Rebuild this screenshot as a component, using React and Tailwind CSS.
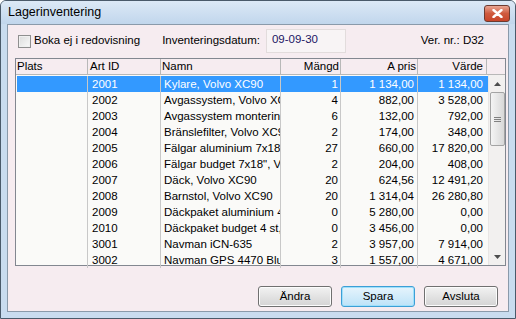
import React from 'react'

const rows = [
  ['2001', 'Kylare, Volvo XC90', '1', '1 134,00', '1 134,00'],
  ['2002', 'Avgassystem, Volvo XC90', '4', '882,00', '3 528,00'],
  ['2003', 'Avgassystem montering', '6', '132,00', '792,00'],
  ['2004', 'Bränslefilter, Volvo XC90', '2', '174,00', '348,00'],
  ['2005', 'Fälgar aluminium 7x18", Volvo', '27', '660,00', '17 820,00'],
  ['2006', 'Fälgar budget 7x18", Volvo', '2', '204,00', '408,00'],
  ['2007', 'Däck, Volvo XC90', '20', '624,56', '12 491,20'],
  ['2008', 'Barnstol, Volvo XC90', '20', '1 314,04', '26 280,80'],
  ['2009', 'Däckpaket aluminium 4 st, Volvo', '0', '5 280,00', '0,00'],
  ['2010', 'Däckpaket budget 4 st, Volvo', '0', '3 456,00', '0,00'],
  ['3001', 'Navman iCN-635', '2', '3 957,00', '7 914,00'],
  ['3002', 'Navman GPS 4470 Bluetooth', '3', '1 557,00', '4 671,00'],
]

const font = { fontFamily: '"Liberation Sans", Arial, sans-serif' }

function Btn({ children, focused }) {
  return (
    <button
      className={`h-[21px] w-[74px] rounded-[3px] border text-[11.5px] text-black ${
        focused
          ? 'border-[#3c9fd6] bg-gradient-to-b from-[#e6f4fc] to-[#bde3f8] shadow-[inset_0_0_0_1px_#9fe0fb]'
          : 'border-[#707070] bg-gradient-to-b from-[#f2f2f2] to-[#d4d4d4] shadow-[inset_0_0_0_1px_#fcfcfc]'
      }`}
    >
      {children}
    </button>
  )
}

export default function App() {
  return (
    <div className="w-[516px] h-[319px] bg-white" style={font}>
      <div className="w-full h-full flex flex-col rounded-t-[6px] border border-[#4a5a6a] bg-[#c9dcef] overflow-hidden">
        {/* title bar */}
        <div className="h-[23px] shrink-0 flex items-center justify-between pl-[7px] pr-[5px] bg-gradient-to-b from-[#dce9f6] to-[#c1d6ec]">
          <span className="text-[12.5px] text-black">Lagerinventering</span>
          <div className="mt-[2px] w-[26px] h-[17px] rounded-[3px] border border-[#6d3b31] bg-gradient-to-b from-[#e8a593] via-[#cf5a3e] to-[#c8452a] flex items-center justify-center">
            <svg width="11" height="9" viewBox="0 0 11 9">
              <path d="M1.5 1 L9.5 8 M9.5 1 L1.5 8" stroke="#fff" strokeWidth="2.4" strokeLinecap="round" />
            </svg>
          </div>
        </div>

        {/* client */}
        <div className="flex-1 mx-[6px] mb-[6px] border border-[#8a9aaa] bg-[#f6ecf0] flex flex-col px-[7px]">
          <div className="h-[32px] flex items-center text-[11.5px] text-black">
            <div className="w-[13px] h-[13px] ml-[3px] border border-[#8f8f8f] bg-gradient-to-br from-[#dcdcdc] to-[#fafafa] shadow-[inset_0_0_0_1px_#f0f0f0]" />
            <span className="ml-[3px]">Boka ej i redovisning</span>
            <span className="ml-[22px]">Inventeringsdatum:</span>
            <div className="ml-[6px] h-[24px] w-[80px] border border-[#e2dcdc] bg-[#f8f4f5] pl-[5px] pb-[3px] flex items-center">
              <span className="text-[#1b1464]">09-09-30</span>
            </div>
            <span className="ml-auto mr-[17px]">Ver. nr.: D32</span>
          </div>

          {/* grid */}
          <div className="mt-[1px] w-[491px] h-[208px] border border-[#828790] bg-[#fafaf8] flex flex-col text-[11.5px]">
            <div className="h-[16px] flex shrink-0 bg-[#f6ecf0] border-b border-[#b8b8b8]">
              <div className="w-[72px] border-r border-[#b8b8b8] pl-[1px] leading-[15px]">Plats</div>
              <div className="w-[73px] border-r border-[#b8b8b8] pl-[2px] leading-[15px]">Art ID</div>
              <div className="w-[120px] border-r border-[#b8b8b8] pl-[1px] leading-[15px]">Namn</div>
              <div className="w-[60px] border-r border-[#b8b8b8] pr-[1px] text-right leading-[15px]">Mängd</div>
              <div className="w-[77px] border-r border-[#b8b8b8] pr-[1px] text-right leading-[15px]">A pris</div>
              <div className="w-[69px] border-r border-[#b8b8b8] pr-[3px] text-right leading-[15px]">Värde</div>
            </div>
            <div className="flex flex-1 min-h-0">
              <div className="flex-1 flex flex-col pt-[1px] pl-[1px]">
                {rows.map((r, i) => {
                  const sel = i === 0
                  const txt = sel ? 'text-white' : 'text-black'
                  return (
                    <div key={r[0]} className={`h-[16px] flex leading-[16px] ${txt} ${sel ? 'bg-[#3399ff]' : ''}`}>
                      <div className="w-[71px] border-r border-[#c8c8c8]" />
                      <div className="w-[73px] border-r border-[#c8c8c8] pl-[4px]">{r[0]}</div>
                      <div className="w-[120px] border-r border-[#c8c8c8] pl-[3px] overflow-hidden whitespace-nowrap">{r[1]}</div>
                      <div className="w-[60px] border-r border-[#c8c8c8] pr-[2px] text-right">{r[2]}</div>
                      <div className="w-[77px] border-r border-[#c8c8c8] pr-[3px] text-right">{r[3]}</div>
                      <div className="w-[67px] pr-[2px] text-right">{r[4]}</div>
                    </div>
                  )
                })}
              </div>
              {/* scrollbar */}
              <div className="w-[17px] flex flex-col items-center bg-[#f2f0ef] border-l border-[#e8e6e5]">
                <div className="h-[17px] flex items-center justify-center">
                  <svg width="7" height="4" viewBox="0 0 7 4"><path d="M0 4 L3.5 0 L7 4 Z" fill="#4d4d4d" /></svg>
                </div>
                <div className="w-[15px] h-[54px] rounded-[2px] border border-[#a4a4a4] bg-gradient-to-r from-[#f4f4f4] via-[#e6e6e6] to-[#d8d8d8] flex items-center justify-center">
                  <div className="flex flex-col gap-[1px]">
                    <div className="w-[7px] h-[1px] bg-[#808080]" />
                    <div className="w-[7px] h-[1px] bg-[#808080]" />
                    <div className="w-[7px] h-[1px] bg-[#808080]" />
                  </div>
                </div>
                <div className="flex-1" />
                <div className="h-[17px] flex items-center justify-center">
                  <svg width="7" height="4" viewBox="0 0 7 4"><path d="M0 0 L3.5 4 L7 0 Z" fill="#4d4d4d" /></svg>
                </div>
              </div>
            </div>
          </div>

          <div className="flex-1 flex items-end justify-end gap-[9px] pr-[3px] pb-[4px]">
            <Btn>Ändra</Btn>
            <Btn focused>Spara</Btn>
            <Btn>Avsluta</Btn>
          </div>
        </div>
      </div>
    </div>
  )
}
